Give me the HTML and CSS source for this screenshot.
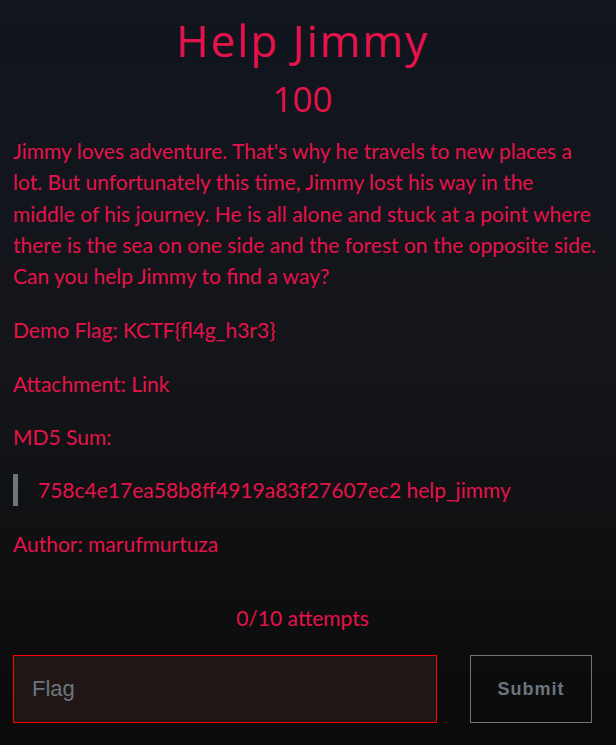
FILE: index.html
```html
<!DOCTYPE html>
<html lang="en">
<head>
  <meta charset="UTF-8" />
  <meta name="viewport" content="width=device-width, initial-scale=1.0" />
  <title>Help Jimmy</title>
  <link rel="stylesheet" href="styles.css">
</head>
<body>
  <div class="challenge">
    <h1 class="challenge-name">Help Jimmy</h1>
    <h2 class="challenge-value">100</h2>

    <div class="challenge-desc">
      <p>Jimmy loves adventure. That's why he travels to new places a lot. But unfortunately this time, Jimmy lost his way in the middle of his journey. He is all alone and stuck at a point where there is the sea on one side and the forest on the opposite side. Can you help Jimmy to find a way?</p>
      <p>Demo Flag: KCTF{fl4g_h3r3}</p>
      <p>Attachment: <a href="#">Link</a></p>
      <p>MD5 Sum:</p>
      <blockquote>758c4e17ea58b8ff4919a83f27607ec2 help_jimmy</blockquote>
      <p>Author: marufmurtuza</p>
    </div>

    <p class="attempts">0/10 attempts</p>

    <form class="submit-row">
      <input type="text" class="flag-input" placeholder="Flag" />
      <button type="submit" class="submit-btn">Submit</button>
    </form>
  </div>
</body>
</html>
```

FILE: styles.css
```css
html {
  background: #0b0b0b;
}
body {
  margin: 0;
  min-height: 745px;
  background: linear-gradient(180deg, #10151e 0%, #141519 50%, #0a0a0a 100%);
  color: #e5134b;
  font-family: Lato, sans-serif;
}
.challenge {
  width: 579px;
  margin-left: 13px;
  padding-top: 14px;
}
.challenge-name {
  margin: 0;
  text-align: center;
  font-family: "Open Sans", sans-serif;
  font-weight: 400;
  font-size: 44px;
  line-height: 52px;
  letter-spacing: 2px;
}
.challenge-value {
  margin: 12px 0 0;
  text-align: center;
  font-family: "Open Sans", sans-serif;
  font-weight: 400;
  font-size: 35px;
  line-height: 41px;
}
.challenge-desc {
  margin: 16px -6px 0 0;
}
.challenge-desc p {
  margin: 0 0 22px;
  font-size: 21px;
  line-height: 31.3px;
}
.challenge-desc p:first-child {
  margin-bottom: 23px;
}
.challenge-desc a {
  color: inherit;
  text-decoration: none;
}
blockquote {
  margin: 0 0 22px;
  padding-left: 20px;
  border-left: 5px solid #6c757d;
  font-size: 21px;
  line-height: 31.3px;
}
.attempts {
  margin: 43px 0 0;
  text-align: center;
  font-size: 21px;
  line-height: 31.3px;
}
.submit-row {
  display: flex;
  gap: 33px;
  margin-top: 22px;
}
.flag-input {
  flex: 1;
  height: 68px;
  box-sizing: border-box;
  padding: 0 18px;
  background: #201616;
  border: 1px solid #ff0000;
  color: #ccc;
  font-family: "Liberation Sans", Arial, sans-serif;
  font-size: 22px;
  outline: none;
}
.flag-input::placeholder {
  color: #6c757d;
}
.submit-btn {
  width: 122px;
  height: 68px;
  background: transparent;
  border: 1px solid #6c757d;
  color: #6c757d;
  font-family: "Liberation Sans", Arial, sans-serif;
  font-weight: bold;
  font-size: 18px;
  letter-spacing: 1px;
}
```
